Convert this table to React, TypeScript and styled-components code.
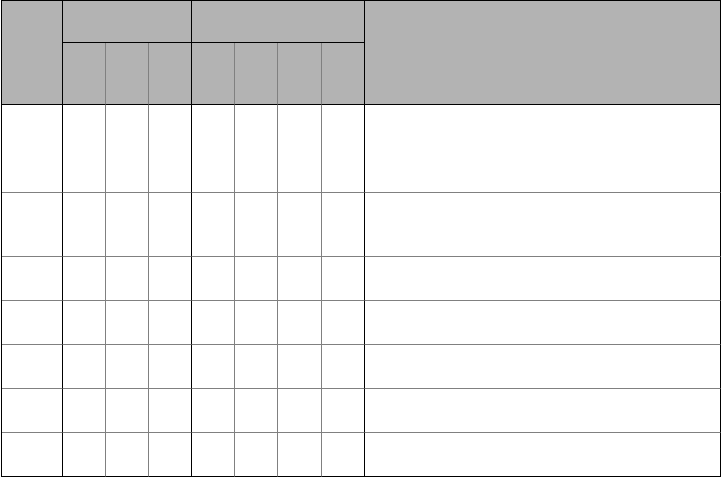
import React from 'react';
import styled, { createGlobalStyle } from 'styled-components';

const GlobalStyle = createGlobalStyle`
    html, body {
        margin: 0;
        padding: 0;
        background: #ffffff;
        font-family: "Liberation Sans", Arial, sans-serif;
    }
`;

const Grid = styled.table`
    margin-left: 1px;
    width: 720px;
    table-layout: fixed;
    border-collapse: separate;
    border-spacing: 0;
    border-left: 1px solid #000;
    border-top: 1px solid #000;
`;

const Row = styled.tr<{ h: number }>`
    height: ${props => props.h}px;
`;

const HeadCell = styled.th<{ strongRight?: boolean }>`
    padding: 0;
    background: #b3b3b3;
    border-right: 1px solid ${props => (props.strongRight ? '#000' : '#808080')};
    border-bottom: 1px solid #000;
`;

const Cell = styled.td<{ strongRight?: boolean; strongBottom?: boolean }>`
    padding: 0;
    background: #ffffff;
    border-right: 1px solid ${props => (props.strongRight ? '#000' : '#808080')};
    border-bottom: 1px solid ${props => (props.strongBottom ? '#000' : '#808080')};
`;

const widths = [61, 43, 43, 43, 43, 43, 44, 43, 356];
// group edges get the black rule
const strong = [true, false, false, true, false, false, false, true, true];
const bodyHeights = [88, 64, 44, 44, 44, 44, 44];

const App = () => {
    return (
        <>
            <GlobalStyle />
            <Grid>
                <colgroup>
                    {widths.map((w, i) => (
                        <col key={i} style={{ width: w }} />
                    ))}
                </colgroup>
                <thead>
                    <Row h={42}>
                        <HeadCell rowSpan={2} strongRight />
                        <HeadCell colSpan={3} strongRight />
                        <HeadCell colSpan={4} strongRight />
                        <HeadCell rowSpan={2} strongRight />
                    </Row>
                    <Row h={62}>
                        {strong.slice(1, 8).map((s, i) => (
                            <HeadCell key={i} strongRight={s} />
                        ))}
                    </Row>
                </thead>
                <tbody>
                    {bodyHeights.map((h, r) => (
                        <Row key={r} h={h}>
                            {strong.map((s, c) => (
                                <Cell
                                    key={c}
                                    strongRight={s}
                                    strongBottom={r === bodyHeights.length - 1}
                                />
                            ))}
                        </Row>
                    ))}
                </tbody>
            </Grid>
        </>
    );
};

export default App;
